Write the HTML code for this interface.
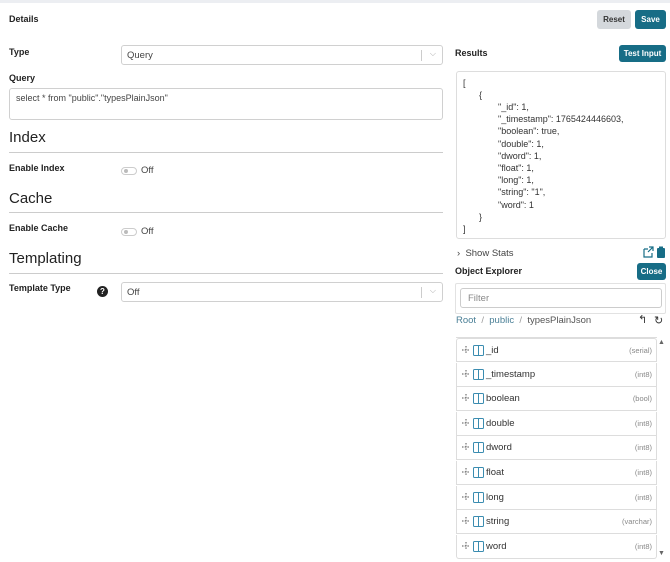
<!DOCTYPE html>
<html><head><style>
*{box-sizing:border-box;margin:0;padding:0}
body{width:670px;height:562px;overflow:hidden;background:#fff;font-family:"Liberation Sans",sans-serif;color:#333;position:relative;border-top:3px solid #eceef2}
.a{position:absolute;white-space:nowrap}
.lbl{font-size:9px;font-weight:bold;color:#222}
.h{font-size:15px;color:#222}
.hr{position:absolute;height:1px;background:#ccc;left:9px;width:434px}
.box{position:absolute;border:1px solid #d0d0d0;border-radius:3px;background:#fff}
.btn{position:absolute;color:#fff;background:#176d86;font-size:8px;font-weight:bold;text-align:center;border-radius:3px}
.tg{position:absolute;width:16px;height:8px;border:1px solid #ccc;border-radius:5px}
.tg:after{content:"";position:absolute;left:2px;top:1px;width:4px;height:4px;border-radius:50%;background:#bbb}
.off{font-size:9.5px;color:#444}
.row{position:absolute;left:456px;width:201px;height:24px;border:1px solid #ddd;border-top:none;font-size:9.5px;color:#333}
.row .n{position:absolute;left:29px;top:6px}
.row .t{position:absolute;right:4px;top:7px;font-size:7.5px;color:#888}
.row svg{position:absolute;left:4px;top:6px}
.j{font-size:9px;color:#333;line-height:12.2px}
</style></head><body>
<div class="a lbl" style="left:9px;top:11px;font-size:9px">Details</div>
<div class="btn" style="left:597px;top:7px;width:34px;height:19px;line-height:19px;background:#d4d8dc;color:#333">Reset</div>
<div class="btn" style="left:635px;top:7px;width:31px;height:19px;line-height:19px">Save</div>

<div class="a lbl" style="left:9px;top:44px">Type</div>
<div class="box" style="left:121px;top:42px;width:322px;height:20px"><span class="a off" style="left:5px;top:4px">Query</span><span class="a" style="right:20px;top:4px;width:1px;height:11px;background:#ccc"></span><span class="a" style="right:6px;top:3px;font-size:8px;color:#aaa">⌵</span></div>
<div class="a lbl" style="left:9px;top:70px">Query</div>
<div class="box" style="left:9px;top:85px;width:434px;height:32px"><span class="a off" style="left:6px;top:4px;font-size:9px">select * from "public"."typesPlainJson"</span></div>
<div class="a h" style="left:9px;top:126px">Index</div>
<div class="hr" style="top:149px"></div>
<div class="a lbl" style="left:9px;top:160px">Enable Index</div>
<div class="tg" style="left:121px;top:164px"></div><div class="a off" style="left:141px;top:162px">Off</div>
<div class="a h" style="left:9px;top:187px">Cache</div>
<div class="hr" style="top:209px"></div>
<div class="a lbl" style="left:9px;top:220px">Enable Cache</div>
<div class="tg" style="left:121px;top:225px"></div><div class="a off" style="left:141px;top:223px">Off</div>
<div class="a h" style="left:9px;top:247px">Templating</div>
<div class="hr" style="top:270px"></div>
<div class="a lbl" style="left:9px;top:280px">Template Type</div>
<div class="a" style="left:97px;top:283px;width:11px;height:11px;border-radius:50%;background:#222;color:#fff;font-size:8px;font-weight:bold;text-align:center;line-height:11px">?</div>
<div class="box" style="left:121px;top:279px;width:322px;height:20px"><span class="a off" style="left:5px;top:4px">Off</span><span class="a" style="right:20px;top:4px;width:1px;height:11px;background:#ccc"></span><span class="a" style="right:6px;top:3px;font-size:8px;color:#aaa">⌵</span></div>

<div class="a lbl" style="left:455px;top:45px">Results</div>
<div class="btn" style="left:619px;top:42px;width:47px;height:17px;line-height:17px">Test Input</div>
<div class="box" style="left:456px;top:68px;width:210px;height:168px;border-color:#ddd">
<div class="a j" style="left:6px;top:5px">[</div>
<div class="a j" style="left:22px;top:17px">{</div>
<div class="a j" style="left:41px;top:29px">"_id": 1,<br>"_timestamp": 1765424446603,<br>"boolean": true,<br>"double": 1,<br>"dword": 1,<br>"float": 1,<br>"long": 1,<br>"string": "1",<br>"word": 1</div>
<div class="a j" style="left:22px;top:139px">}</div>
<div class="a j" style="left:6px;top:151px">]</div>
</div>
<div class="a off" style="left:457px;top:245px">›&nbsp; Show Stats</div>
<svg class="a" style="left:643px;top:243px" width="24" height="12"><path d="M1 3h4M1 3v8h8V7M6 1h4v4M10 1L5 6" stroke="#176d86" fill="none" stroke-width="1.2"/><rect x="14" y="2" width="8" height="10" rx="1" fill="#176d86"/><rect x="16" y="0.5" width="4" height="2.5" fill="#176d86"/></svg>
<div class="a lbl" style="left:455px;top:263px">Object Explorer</div>
<div class="btn" style="left:637px;top:260px;width:29px;height:17px;line-height:17px">Close</div>
<div class="box" style="left:455px;top:280px;width:211px;height:31px;border-color:#e2e2e2;border-radius:2px"></div>
<div class="box" style="left:460px;top:285px;width:202px;height:20px;border-color:#ccc"><span class="a off" style="left:7px;top:4px;color:#888">Filter</span></div>
<div class="a off" style="left:456px;top:312px;color:#4a7f96">Root&nbsp; <span style="color:#999">/</span>&nbsp; public&nbsp; <span style="color:#999">/</span>&nbsp; <span style="color:#555">typesPlainJson</span></div>
<div class="a" style="left:638px;top:310px;font-size:11px;color:#333">↰</div>
<div class="a" style="left:654px;top:311px;font-size:11px;color:#333">↻</div>
<div class="a" style="left:456px;top:334px;width:201px;height:1px;background:#ddd"></div>
<div class="a" style="left:658px;top:336px;font-size:7px;color:#666">▲</div>
<div class="a" style="left:658px;top:547px;font-size:7px;color:#666">▼</div>
<div id="rows"></div>
<script>
var r=[["_id","(serial)"],["_timestamp","(int8)"],["boolean","(bool)"],["double","(int8)"],["dword","(int8)"],["float","(int8)"],["long","(int8)"],["string","(varchar)"],["word","(int8)"]],h="";
r.forEach(function(x,i){h+='<div class="row" style="top:'+(335+i*24.6)+'px;border-top:'+(i==0?'1px solid #ddd':'none')+';border-radius:'+(i==0?'3px 3px 0 0':i==8?'0 0 3px 3px':'0')+'"><svg width="24" height="11"><path d="M5 1v8M1 5h8" stroke="#555" stroke-width="1" stroke-dasharray="1.5 1.2"/><rect x="12.5" y="0.5" width="10" height="10" rx="1" fill="none" stroke="#3a8cb0"/><path d="M17.5 1v9" stroke="#3a8cb0"/></svg><span class="n">'+x[0]+'</span><span class="t">'+x[1]+'</span></div>'});
document.getElementById("rows").innerHTML=h;
</script>
</body></html>
